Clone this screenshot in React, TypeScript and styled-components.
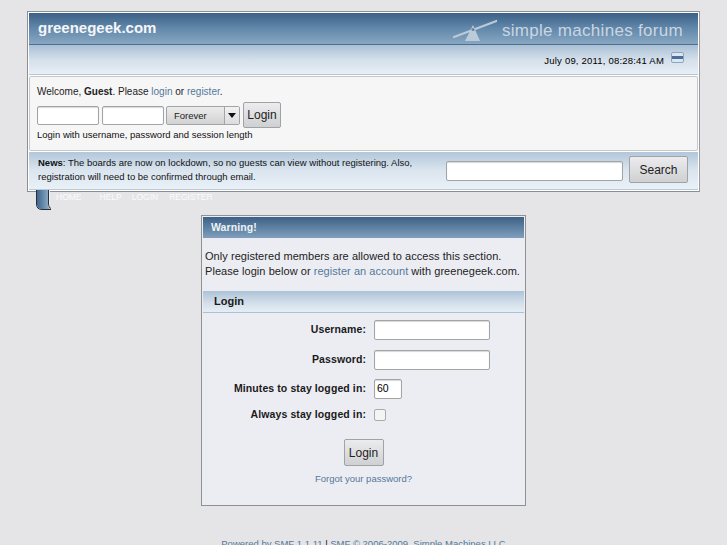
import React from "react";
import styled, { createGlobalStyle } from "styled-components";

const Global = createGlobalStyle`
  html, body { margin: 0; padding: 0; height: 545px; overflow: hidden; background: #e5e5e8; }
  body { font-family: "Liberation Sans", Arial, sans-serif; color: #000; }
  a { color: #54789a; text-decoration: none; }
`;

const Page = styled.div`
  width: 727px;
  height: 545px;
  overflow: hidden;
  padding-top: 11px;
  box-sizing: border-box;
`;

const Upper = styled.div`
  width: 673px;
  margin-left: 27px;
  box-sizing: border-box;
  border: 1px solid #8c8e92;
  border-right-color: #9a9ca0;
  background: #fff;
  padding: 1px;
`;

const Header = styled.div`
  height: 31px;
  background: linear-gradient(#3c6086 0%, #5f85a8 45%, #88a7c2 100%);
  border-bottom: 1px solid #4f6f8f;
  display: flex;
  align-items: center;
  justify-content: space-between;
  padding: 0 15px 0 9px;
`;

const ForumName = styled.div`
  color: #f4f6f8;
  font-size: 15px;
  font-weight: bold;
  margin-bottom: 2px;
`;

const Brand = styled.div`
  display: flex;
  align-items: center;
  gap: 5px;
`;

const BrandText = styled.span`
  color: #c9d6e2;
  font-size: 17px;
  letter-spacing: 0.3px;
  margin-top: 4px;
`;

const SubBar = styled.div`
  height: 28px;
  background: linear-gradient(#a9c0d5 0%, #d3dfea 50%, #e8eff6 100%);
  border-bottom: 1px solid #b5c6d6;
  display: flex;
  align-items: center;
  justify-content: flex-end;
  padding: 1px 14px 0 0;
  font-size: 9.5px;
  letter-spacing: 0.2px;
`;

const Toggle = styled.span`
  width: 11px;
  height: 9px;
  margin: -6px 0 0 7px;
  background: #dce6f0;
  border: 1px solid #8aa5c0;
  border-radius: 2px;
  display: flex;
  align-items: center;

  &::after {
    content: "";
    width: 100%;
    height: 3px;
    background: #4a7098;
  }
`;

const UserPanel = styled.div`
  height: 73px;
  margin-top: 1px;
  background: #f6f6f6;
  border: 1px solid #c6c8ca;
  border-radius: 2px;
  padding: 0 0 0 7px;
`;

const Welcome = styled.div`
  font-size: 10px;
  line-height: 13px;
  padding-top: 8px;
  color: #222;
`;

const LoginRow = styled.div`
  display: flex;
  align-items: center;
  margin-top: 4px;
  height: 27px;
`;

const TextField = styled.span<{ $w: number; $h?: number }>`
  display: block;
  width: ${(p) => p.$w}px;
  height: ${(p) => p.$h ?? 17}px;
  background: #fff;
  border: 1px solid #a2a4a6;
  border-radius: 2px;
  box-shadow: inset 0 1px 1px #d8d8d8;
  flex: none;
  font-size: 10.5px;
  line-height: 17px;
  padding-left: 2px;
`;

const SmallField = styled(TextField)`
  margin-right: 3px;
  padding-left: 0;
`;

const SearchField = styled(TextField)`
  margin-top: 3px;
`;

const SelectBox = styled.div`
  display: flex;
  width: 72px;
  height: 17px;
  margin: -1px 3px 0 -1px;
  border: 1px solid #a2a4a6;
  border-radius: 2px;
  background: linear-gradient(#ececec, #d2d2d4);
  font-size: 9.5px;
  line-height: 18px;
  color: #222;
`;

const SelectLabel = styled.span`
  flex: 1;
  padding-left: 7px;
`;

const SelectArrow = styled.span`
  width: 14px;
  border-left: 1px solid #a2a4a6;
  background: linear-gradient(#f2f2f2, #dcdcde);
  position: relative;

  &::after {
    content: "";
    position: absolute;
    left: 3px;
    top: 6px;
    border: 4px solid transparent;
    border-top: 5px solid #111;
    border-bottom: 0;
  }
`;

const Button = styled.span<{ $w: number; $h: number }>`
  display: flex;
  align-items: center;
  justify-content: center;
  flex: none;
  width: ${(p) => p.$w}px;
  height: ${(p) => p.$h}px;
  border: 1px solid #a0a2a4;
  border-radius: 2px;
  background: linear-gradient(#ececee, #cfd0d2);
  font-size: 12px;
  color: #222;
`;

const QuickLogin = styled(Button)`
  margin-top: -1px;
`;

const Hint = styled.div`
  font-size: 9.5px;
  line-height: 12px;
  color: #111;
`;

const NewsBar = styled.div`
  height: 37px;
  margin-top: 1px;
  background: linear-gradient(#b2c7da 0%, #dbe5ef 50%, #e9f0f7 100%);
  border-bottom: 1px solid #b9cad9;
  display: flex;
  align-items: center;
  justify-content: space-between;
  padding: 0 10px 0 9px;
`;

const NewsText = styled.div`
  width: 390px;
  margin-top: -2px;
  font-size: 9.5px;
  line-height: 14px;
  color: #111;
`;

const SearchForm = styled.div`
  display: flex;
  align-items: center;
  gap: 6px;
  margin-top: -2px;
`;

const Tabs = styled.div`
  display: flex;
  height: 20px;
  margin-left: 36px;
  margin-top: -2px;
`;

const TabLabel = styled.span<{ $gap: number }>`
  color: #fbfbfd;
  font-size: 8.5px;
  line-height: 14px;
  margin-left: ${(p) => p.$gap}px;
`;

const WarningBox = styled.div`
  width: 325px;
  height: 291px;
  margin: 5px 0 0 201px;
  box-sizing: border-box;
  background: #ecedf3;
  border: 1px solid #8e9094;
  padding: 1px;
`;

const TitleBar = styled.div`
  height: 21px;
  background: linear-gradient(#3c6086, #7f9fbc);
  color: #eef2f6;
  font-size: 10.5px;
  font-weight: bold;
  letter-spacing: 0.1px;
  line-height: 21px;
  padding-left: 8px;
`;

const Message = styled.div`
  font-size: 11px;
  letter-spacing: 0.05px;
  line-height: 15px;
  padding: 11px 0 0 2px;
  height: 42px;
  color: #222;
  white-space: nowrap;
`;

const CatBar = styled.div`
  height: 21px;
  background: linear-gradient(#adc3d7 0%, #cfdce8 50%, #e6eef5 100%);
  border-bottom: 1px solid #a9c1d6;
  font-size: 11px;
  font-weight: bold;
  line-height: 20px;
  padding-left: 11px;
  color: #1a1a1a;
`;

const FormGrid = styled.div`
  display: grid;
  grid-template-columns: 163px auto;
  column-gap: 8px;
  justify-content: start;
  align-items: center;
  grid-template-rows: 30px 29px 29px 23px;
  padding-top: 2px;
`;

const FieldLabel = styled.span`
  text-align: right;
  font-size: 10.5px;
  font-weight: bold;
  letter-spacing: 0.1px;
  margin-top: -2px;
  color: #1a1a1a;
`;

const CheckBox = styled.span`
  display: block;
  width: 10px;
  height: 10px;
  border: 1px solid #a8aaac;
  border-radius: 2px;
  background: #f4f4f4;
`;

const Centered = styled.div`
  display: flex;
  flex-direction: column;
  align-items: center;
  margin-top: 13px;
`;

const Forgot = styled.a`
  font-size: 9.5px;
  margin-top: 7px;
`;

const Footer = styled.div`
  text-align: center;
  font-size: 9.5px;
  margin-top: 32px;
  color: #54789a;
`;

const FooterSep = styled.span`
  color: #111;
`;

const BrandMark = () => (
  <svg width="44" height="24" viewBox="0 0 44 24">
    <path d="M1 20 L43.5 4" stroke="#b9cad9" strokeWidth="2.2" strokeLinecap="round" fill="none" />
    <path d="M20 8 L27 24 L12 24 Z" fill="#bccbd9" />
    <circle cx="20" cy="12.5" r="1.5" fill="#5f85a8" />
  </svg>
);

const TabCap = () => (
  <svg width="15" height="20" viewBox="0 0 15 20">
    <defs>
      <linearGradient id="capFill" x1="0" x2="1" y1="0" y2="0">
        <stop offset="0" stopColor="#3e658c" />
        <stop offset="1" stopColor="#9db8d0" />
      </linearGradient>
    </defs>
    <path d="M1 0 H12 V15 Q12 18 15 19 H6 Q1 19 1 14 Z" fill="url(#capFill)" />
    <path d="M12 0 H14 V16 Q14 18 15 18.5 Q12 18 12 15 Z" fill="#f0f2f5" />
    <path d="M0.5 0 V14 Q0.5 19.5 6 19.5 H15" stroke="#26303c" strokeWidth="1" fill="none" />
    <path d="M12.5 0 V14 Q12.5 18 15 18.5" stroke="#26303c" strokeWidth="1" fill="none" />
  </svg>
);

export default function App() {
  return (
    <Page>
      <Global />
      <Upper>
        <Header>
          <ForumName>greenegeek.com</ForumName>
          <Brand>
            <BrandMark />
            <BrandText>simple machines forum</BrandText>
          </Brand>
        </Header>
        <SubBar>
          July 09, 2011, 08:28:41 AM
          <Toggle />
        </SubBar>
        <UserPanel>
          <Welcome>
            Welcome, <b>Guest</b>. Please <a href="#">login</a> or <a href="#">register</a>.
          </Welcome>
          <LoginRow>
            <SmallField $w={60} />
            <SmallField $w={60} />
            <SelectBox>
              <SelectLabel>Forever</SelectLabel>
              <SelectArrow />
            </SelectBox>
            <QuickLogin $w={36} $h={24}>Login</QuickLogin>
          </LoginRow>
          <Hint>Login with username, password and session length</Hint>
        </UserPanel>
        <NewsBar>
          <NewsText>
            <b>News</b>: The boards are now on lockdown, so no guests can view without registering. Also, registration will need to be confirmed through email.
          </NewsText>
          <SearchForm>
            <SearchField $w={173} $h={18} />
            <Button $w={57} $h={25}>Search</Button>
          </SearchForm>
        </NewsBar>
      </Upper>
      <Tabs>
        <TabCap />
        <TabLabel $gap={5}>HOME</TabLabel>
        <TabLabel $gap={18}>HELP</TabLabel>
        <TabLabel $gap={10}>LOGIN</TabLabel>
        <TabLabel $gap={11}>REGISTER</TabLabel>
      </Tabs>
      <WarningBox>
        <TitleBar>Warning!</TitleBar>
        <Message>
          Only registered members are allowed to access this section.
          <br />
          Please login below or <a href="#">register an account</a> with greenegeek.com.
        </Message>
        <CatBar>Login</CatBar>
        <FormGrid>
          <FieldLabel>Username:</FieldLabel>
          <TextField $w={112} $h={18} />
          <FieldLabel>Password:</FieldLabel>
          <TextField $w={112} $h={18} />
          <FieldLabel>Minutes to stay logged in:</FieldLabel>
          <TextField $w={24} $h={18}>60</TextField>
          <FieldLabel>Always stay logged in:</FieldLabel>
          <CheckBox />
        </FormGrid>
        <Centered>
          <Button $w={38} $h={25}>Login</Button>
          <Forgot href="#">Forgot your password?</Forgot>
        </Centered>
      </WarningBox>
      <Footer>
        Powered by SMF 1.1.11 <FooterSep>|</FooterSep> SMF © 2006-2009, Simple Machines LLC
      </Footer>
    </Page>
  );
}
